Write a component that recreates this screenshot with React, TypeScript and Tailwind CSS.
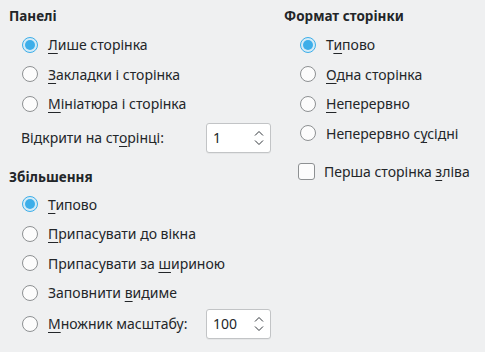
import type { ReactNode } from "react";

const font = { fontFamily: '"Noto Sans", "DejaVu Sans", sans-serif' };

function Mn({ pre = "", k, post = "" }: { pre?: string; k: string; post?: string }) {
  return (
    <span>
      {pre}
      <span className="underline decoration-1 underline-offset-[3px]">{k}</span>
      {post}
    </span>
  );
}

function RadioDot({ checked }: { checked?: boolean }) {
  return (
    <svg width="18" height="18" viewBox="0 0 18 18" className="shrink-0">
      {checked ? (
        <>
          <circle cx="9" cy="9" r="7.5" fill="#d4ebf7" stroke="#3daee9" strokeWidth="1" />
          <circle cx="9" cy="9" r="5" fill="#3daee9" />
        </>
      ) : (
        <circle cx="9" cy="9" r="7.5" fill="#fcfcfc" stroke="#8d9092" strokeWidth="1" />
      )}
    </svg>
  );
}

function Radio({ checked, children }: { checked?: boolean; children: ReactNode }) {
  return (
    <div className="flex h-[29.5px] items-center gap-[9px]">
      <RadioDot checked={checked} />
      <span>{children}</span>
    </div>
  );
}

function Spin({ value }: { value: string }) {
  return (
    <div className="flex h-[30px] w-[65px] items-center justify-between rounded-[3px] border border-[#c2c4c6] bg-white pl-[6px] pr-[5px] shadow-[0_1px_0_rgba(0,0,0,0.04)]">
      <span>{value}</span>
      <svg width="12" height="20" viewBox="0 0 12 20" fill="none" stroke="#31363b" strokeWidth="1">
        <path d="M2 7.5 L6 3.5 L10 7.5" />
        <path d="M2 12.5 L6 16.5 L10 12.5" />
      </svg>
    </div>
  );
}

export default function App() {
  return (
    <div className="flex h-[352px] w-[485px] bg-[#eff0f1] pl-[9px] pt-[6px] text-[14px] text-[#232629]" style={font}>
      <div className="flex w-[275px] flex-col">
        <h2 className="h-[20px] text-[13.5px] font-bold leading-[20px]">Панелі</h2>
        <div className="mt-[4px] flex flex-col pl-[12px]">
          <Radio checked><Mn k="Л" post="ише сторінка" /></Radio>
          <Radio><Mn k="З" post="акладки і сторінка" /></Radio>
          <Radio><Mn k="М" post="ініатюра і сторінка" /></Radio>
        </div>
        <div className="mt-[4px] flex h-[30px] items-center pl-[12px]">
          <span className="w-[185px]"><Mn pre="Відкрити на ст" k="о" post="рінці:" /></span>
          <Spin value="1" />
        </div>
        <h2 className="mt-[14px] h-[20px] text-[13.5px] font-bold leading-[20px]">Збільшення</h2>
        <div className="mt-[3px] flex flex-col pl-[12px]">
          <Radio checked><Mn k="Т" post="ипово" /></Radio>
          <Radio><Mn k="П" post="рипасувати до вікна" /></Radio>
          <Radio><Mn pre="Припасувати за " k="ш" post="ириною" /></Radio>
          <Radio><Mn pre="Заповнити " k="в" post="идиме" /></Radio>
          <div className="mt-[1px] flex h-[30px] items-center gap-[9px]">
            <RadioDot />
            <span className="w-[149px]"><Mn k="М" post="ножник масштабу:" /></span>
            <Spin value="100" />
          </div>
        </div>
      </div>
      <div className="flex flex-col">
        <h2 className="h-[20px] text-[13.5px] font-bold leading-[20px]">Формат сторінки</h2>
        <div className="mt-[4px] flex flex-col pl-[15px]">
          <Radio checked><Mn pre="Т" k="и" post="пово" /></Radio>
          <Radio><Mn k="О" post="дна сторінка" /></Radio>
          <Radio><Mn k="Н" post="еперервно" /></Radio>
          <Radio><Mn pre="Неперервно с" k="у" post="сідні" /></Radio>
          <div className="mt-[8px] flex h-[30px] items-center gap-[9px]">
            <span className="ml-[-1px] h-[17px] w-[17px] rounded-[3px] border border-[#8d9092] bg-[#fcfcfc]" />
            <span><Mn pre="Перша сторінка " k="з" post="ліва" /></span>
          </div>
        </div>
      </div>
    </div>
  );
}
